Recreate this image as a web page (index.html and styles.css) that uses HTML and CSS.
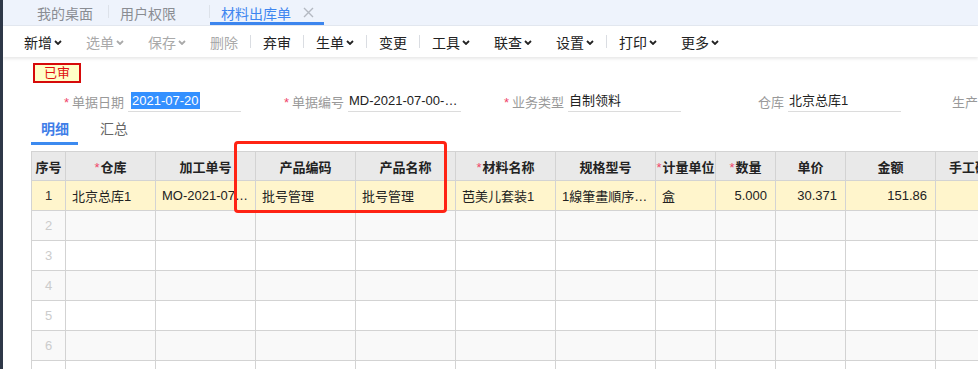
FILE: index.html
```html
<!DOCTYPE html>
<html lang="zh-CN">
<head>
  <meta charset="UTF-8" />
  <title>材料出库单</title>
  <link rel="stylesheet" href="styles.css">
</head>
<body>
  <div class="side"></div>

  <div class="main">
    <!-- Tabs -->
    <div class="tabbar">
      <div class="tab tab-home">我的桌面</div>
      <span class="tab-sep"></span>
      <div class="tab">用户权限<span class="tab-close hidden"></span></div>
      <span class="tab-sep"></span>
      <div class="tab active">材料出库单
        <span class="tab-close">
          <svg width="11" height="11" viewBox="0 0 11 11"><path d="M1 1L10 10M10 1L1 10" stroke="#b4b9c2" stroke-width="1.4" fill="none"/></svg>
        </span>
      </div>
    </div>

    <!-- Toolbar -->
    <div class="toolbar">
      <span class="tool">新增<i class="caret"></i></span>
      <span class="tool off">选单<i class="caret"></i></span>
      <span class="tool off">保存<i class="caret"></i></span>
      <span class="tool off">删除</span>
      <span class="tool-sep"></span>
      <span class="tool">弃审</span>
      <span class="tool-sep"></span>
      <span class="tool">生单<i class="caret"></i></span>
      <span class="tool-sep"></span>
      <span class="tool">变更</span>
      <span class="tool-sep"></span>
      <span class="tool">工具<i class="caret"></i></span>
      <span class="tool">联查<i class="caret"></i></span>
      <span class="tool">设置<i class="caret"></i></span>
      <span class="tool-sep"></span>
      <span class="tool">打印<i class="caret"></i></span>
      <span class="tool">更多<i class="caret"></i></span>
    </div>

    <!-- Header form -->
    <div class="form">
      <div class="badge">已审</div>
      <div class="fields">
        <div class="field">
          <label><b>*</b>单据日期</label>
          <div class="value"><span class="selected">2021-07-20</span></div>
        </div>
        <div class="field">
          <label><b>*</b>单据编号</label>
          <div class="value">MD-2021-07-00-00012</div>
        </div>
        <div class="field">
          <label><b>*</b>业务类型</label>
          <div class="value">自制领料</div>
        </div>
        <div class="field">
          <label>仓库</label>
          <div class="value">北京总库1</div>
        </div>
        <div class="field">
          <label>生产车间</label>
          <div class="value"></div>
        </div>
      </div>
    </div>

    <!-- Detail tabs -->
    <div class="subtabs">
      <span class="subtab active">明细</span>
      <span class="subtab">汇总</span>
    </div>

    <!-- Grid -->
    <div class="grid-wrap">
      <table class="grid">
        <colgroup>
          <col style="width:34px"><col style="width:90px"><col style="width:100px">
          <col style="width:100px"><col style="width:100px"><col style="width:100px">
          <col style="width:100px"><col style="width:60px"><col style="width:60px">
          <col style="width:70px"><col style="width:90px"><col style="width:100px">
        </colgroup>
        <thead>
          <tr>
            <th>序号</th>
            <th><b>*</b>仓库</th>
            <th>加工单号</th>
            <th>产品编码</th>
            <th>产品名称</th>
            <th><b>*</b>材料名称</th>
            <th>规格型号</th>
            <th><b>*</b>计量单位</th>
            <th><b>*</b>数量</th>
            <th>单价</th>
            <th>金额</th>
            <th class="clip">手工确认</th>
          </tr>
        </thead>
        <tbody>
          <tr class="current">
            <td class="idx">1</td>
            <td>北京总库1</td>
            <td>MO-2021-07-00-0001</td>
            <td>批号管理</td>
            <td>批号管理</td>
            <td>芭美儿套装1</td>
            <td>1線筆畫順序練習</td>
            <td>盒</td>
            <td class="num">5.000</td>
            <td class="num">30.371</td>
            <td class="num">151.86</td>
            <td></td>
          </tr>
          <tr><td class="idx">2</td><td></td><td></td><td></td><td></td><td></td><td></td><td></td><td></td><td></td><td></td><td></td></tr>
          <tr><td class="idx">3</td><td></td><td></td><td></td><td></td><td></td><td></td><td></td><td></td><td></td><td></td><td></td></tr>
          <tr><td class="idx">4</td><td></td><td></td><td></td><td></td><td></td><td></td><td></td><td></td><td></td><td></td><td></td></tr>
          <tr><td class="idx">5</td><td></td><td></td><td></td><td></td><td></td><td></td><td></td><td></td><td></td><td></td><td></td></tr>
          <tr><td class="idx">6</td><td></td><td></td><td></td><td></td><td></td><td></td><td></td><td></td><td></td><td></td><td></td></tr>
          <tr><td class="idx">7</td><td></td><td></td><td></td><td></td><td></td><td></td><td></td><td></td><td></td><td></td><td></td></tr>
        </tbody>
      </table>
    </div>

    <!-- annotation box drawn over the grid -->
    <div class="mark"></div>
  </div>
</body>
</html>
```

FILE: styles.css
```css
* {
  box-sizing: border-box;
}

html, body {
  height: 100%;
}

body {
  margin: 0;
  display: flex;
  overflow: hidden;
  font-family: "Liberation Sans", "Noto Sans CJK SC", sans-serif;
  font-size: 13px;
  color: #333;
  background: #fff;
}

.side {
  width: 3px;
  flex: none;
  background-color: #2e3848;
}

.main {
  position: relative;
  flex: 1;
  min-width: 0;
  overflow: hidden;
}

/* Tabs */
.tabbar {
  height: 26px;
  display: flex;
  align-items: stretch;
  padding-left: 23px;
  background-color: #eef3fc;
  border-bottom: 1px solid #e3e8f0;
}

.tab {
  position: relative;
  display: flex;
  align-items: center;
  padding: 0 10px 0 11px;
  font-size: 14px;
  color: #8a8d93;
}

.tab-home {
  padding-right: 15px;
}

.tab.active {
  color: #3f86f0;
}

.tab.active::after {
  content: "";
  position: absolute;
  left: 0;
  right: 0;
  bottom: 0;
  height: 3px;
  background-color: #3c85ee;
}

.tab-close {
  display: inline-flex;
  width: 11px;
  height: 11px;
  margin-left: 12px;
}

.tab-close.hidden {
  visibility: hidden;
}

.tab-sep {
  width: 1px;
  margin: 5px 0 7px;
  background-color: #dde2ea;
}

/* Toolbar */
.toolbar {
  height: 31px;
  display: flex;
  align-items: center;
  padding-left: 9px;
  background-color: #fff;
  box-shadow: 0 2px 3px rgba(0, 0, 0, 0.09);
  position: relative;
}

.tool {
  display: inline-flex;
  align-items: center;
  padding: 0 12px;
  font-size: 14px;
  color: #222;
}

.tool.off {
  color: #a9a9a9;
}

.caret {
  width: 8px;
  height: 5px;
  margin-left: 2px;
  margin-top: 1px;
  background: no-repeat center / 8px 5px;
  background-image: url("data:image/svg+xml;utf8,<svg xmlns='http://www.w3.org/2000/svg' width='8' height='5' viewBox='0 0 8 5'><path d='M1 1l3 3 3-3' stroke='%23222' stroke-width='1.8' fill='none'/></svg>");
}

.tool.off .caret {
  background-image: url("data:image/svg+xml;utf8,<svg xmlns='http://www.w3.org/2000/svg' width='8' height='5' viewBox='0 0 8 5'><path d='M1 1l3 3 3-3' stroke='%23a9a9a9' stroke-width='1.8' fill='none'/></svg>");
}

.tool-sep {
  width: 1px;
  height: 13px;
  background-color: #dadde2;
}

/* Form */
.form {
  padding-top: 6px;
}

.badge {
  width: 48px;
  height: 20px;
  margin-left: 30px;
  border: 2px solid #d60a0a;
  background-color: #ffffc8;
  color: #e01010;
  font-size: 13px;
  line-height: 16px;
  text-align: center;
}

.fields {
  display: flex;
  margin-top: 7px;
  padding-left: 29px;
  white-space: nowrap;
}

.field {
  flex: none;
  width: 220px;
  display: flex;
  align-items: center;
}

.field label {
  width: 96px;
  padding-right: 4px;
  text-align: right;
  color: #999;
  font-size: 13px;
}

.field label b,
.grid th b {
  font-weight: normal;
  color: #f0456a;
  margin-right: 3px;
}

.value {
  width: 113px;
  height: 22px;
  line-height: 21px;
  padding-left: 1px;
  border-bottom: 1px solid #dcdcdc;
  overflow: hidden;
  text-overflow: ellipsis;
  color: #222;
}

.selected {
  display: inline-block;
  line-height: 17px;
  padding: 0 1px;
  margin-left: 2px;
  background-color: #3390ff;
  color: #fff;
}

/* Detail tabs */
.subtabs {
  display: flex;
  gap: 12px;
  margin: 4px 0 0 28px;
}

.subtab {
  padding: 0 9px 0 10px;
  height: 29px;
  line-height: 27px;
  font-size: 14px;
  color: #666;
  border-bottom: 3px solid transparent;
}

.subtab.active {
  color: #3f7ee8;
  font-weight: bold;
  border-bottom-color: #3c8af0;
}

/* Grid */
.grid-wrap {
  margin: 6px 0 0 28px;
  overflow: hidden;
}

.grid {
  table-layout: fixed;
  width: 1004px;
  border-collapse: collapse;
}

.grid th,
.grid td {
  height: 30px;
  padding: 0 6px;
  border: 1px solid #d3d3d3;
  white-space: nowrap;
  overflow: hidden;
  text-overflow: ellipsis;
  font-size: 13px;
}

.grid th {
  height: 29px;
  padding: 0;
  background-color: #e9e9e9;
  color: #222;
  font-weight: bold;
  text-align: center;
  text-overflow: clip;
}

.grid th b {
  margin-right: 1px;
}

.grid th.clip {
  text-align: left;
  padding-left: 13px;
}

.grid td {
  color: #222;
}

.grid tbody tr:nth-child(even) td {
  background-color: #f9f9f9;
}

.grid tbody tr.current td {
  background-color: #fff5cc;
}

.grid td.idx {
  text-align: center;
  padding: 0;
  color: #ccc;
}

.grid tr.current td.idx {
  color: #333;
}

.grid td.num {
  text-align: right;
  padding-right: 8px;
}

/* red annotation */
.mark {
  position: absolute;
  top: 141px;
  left: 231px;
  width: 213px;
  height: 72px;
  border: 3px solid #ff2414;
  border-radius: 4px;
}
```
